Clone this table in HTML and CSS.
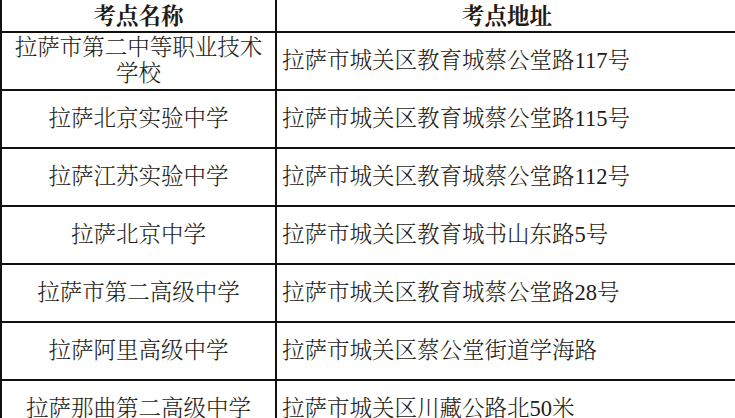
FILE: index.html
```html
<!DOCTYPE html>
<html lang="zh-CN">
<head>
<meta charset="utf-8">
<title>考点</title>
<link rel="stylesheet" href="styles.css">
</head>
<body>
<div class="sheet">
  <div class="cell head">考点名称</div>
  <div class="cell head">考点地址</div>

  <div class="cell name">拉萨市第二中等职业技术学校</div>
  <div class="cell addr">拉萨市城关区教育城蔡公堂路117号</div>

  <div class="cell name">拉萨北京实验中学</div>
  <div class="cell addr">拉萨市城关区教育城蔡公堂路115号</div>

  <div class="cell name">拉萨江苏实验中学</div>
  <div class="cell addr">拉萨市城关区教育城蔡公堂路112号</div>

  <div class="cell name">拉萨北京中学</div>
  <div class="cell addr">拉萨市城关区教育城书山东路5号</div>

  <div class="cell name">拉萨市第二高级中学</div>
  <div class="cell addr">拉萨市城关区教育城蔡公堂路28号</div>

  <div class="cell name">拉萨阿里高级中学</div>
  <div class="cell addr">拉萨市城关区蔡公堂街道学海路</div>

  <div class="cell name">拉萨那曲第二高级中学</div>
  <div class="cell addr">拉萨市城关区川藏公路北50米</div>
</div>
</body>
</html>
```

FILE: styles.css
```css
html, body {
  margin: 0;
  padding: 0;
  background: #ffffff;
  overflow: hidden;
}

body {
  width: 735px;
  height: 418px;
  font-family: "Liberation Serif", "Noto Serif CJK SC", "Noto Sans CJK SC", serif;
  color: #1e1c16;
}

.sheet {
  margin-top: -2px;
  width: 740px;
  display: grid;
  grid-template-columns: 273px 1fr;
  grid-template-rows: 31px;
  grid-auto-rows: 56px;
  gap: 2px;
  padding: 2px 0 0 2px;
  background: #111111;
}

.cell {
  background: #ffffff;
  display: flex;
  align-items: center;
  font-size: 22.5px;
  line-height: 26px;
  font-weight: 300;
}

.head {
  justify-content: center;
  font-weight: bold;
  padding-top: 2px;
  box-sizing: border-box;
}

.head:nth-child(2) {
  padding-right: 5px;
}

.name {
  justify-content: center;
  text-align: center;
  padding: 0 6px;
}

.addr {
  padding-left: 5px;
}
```
